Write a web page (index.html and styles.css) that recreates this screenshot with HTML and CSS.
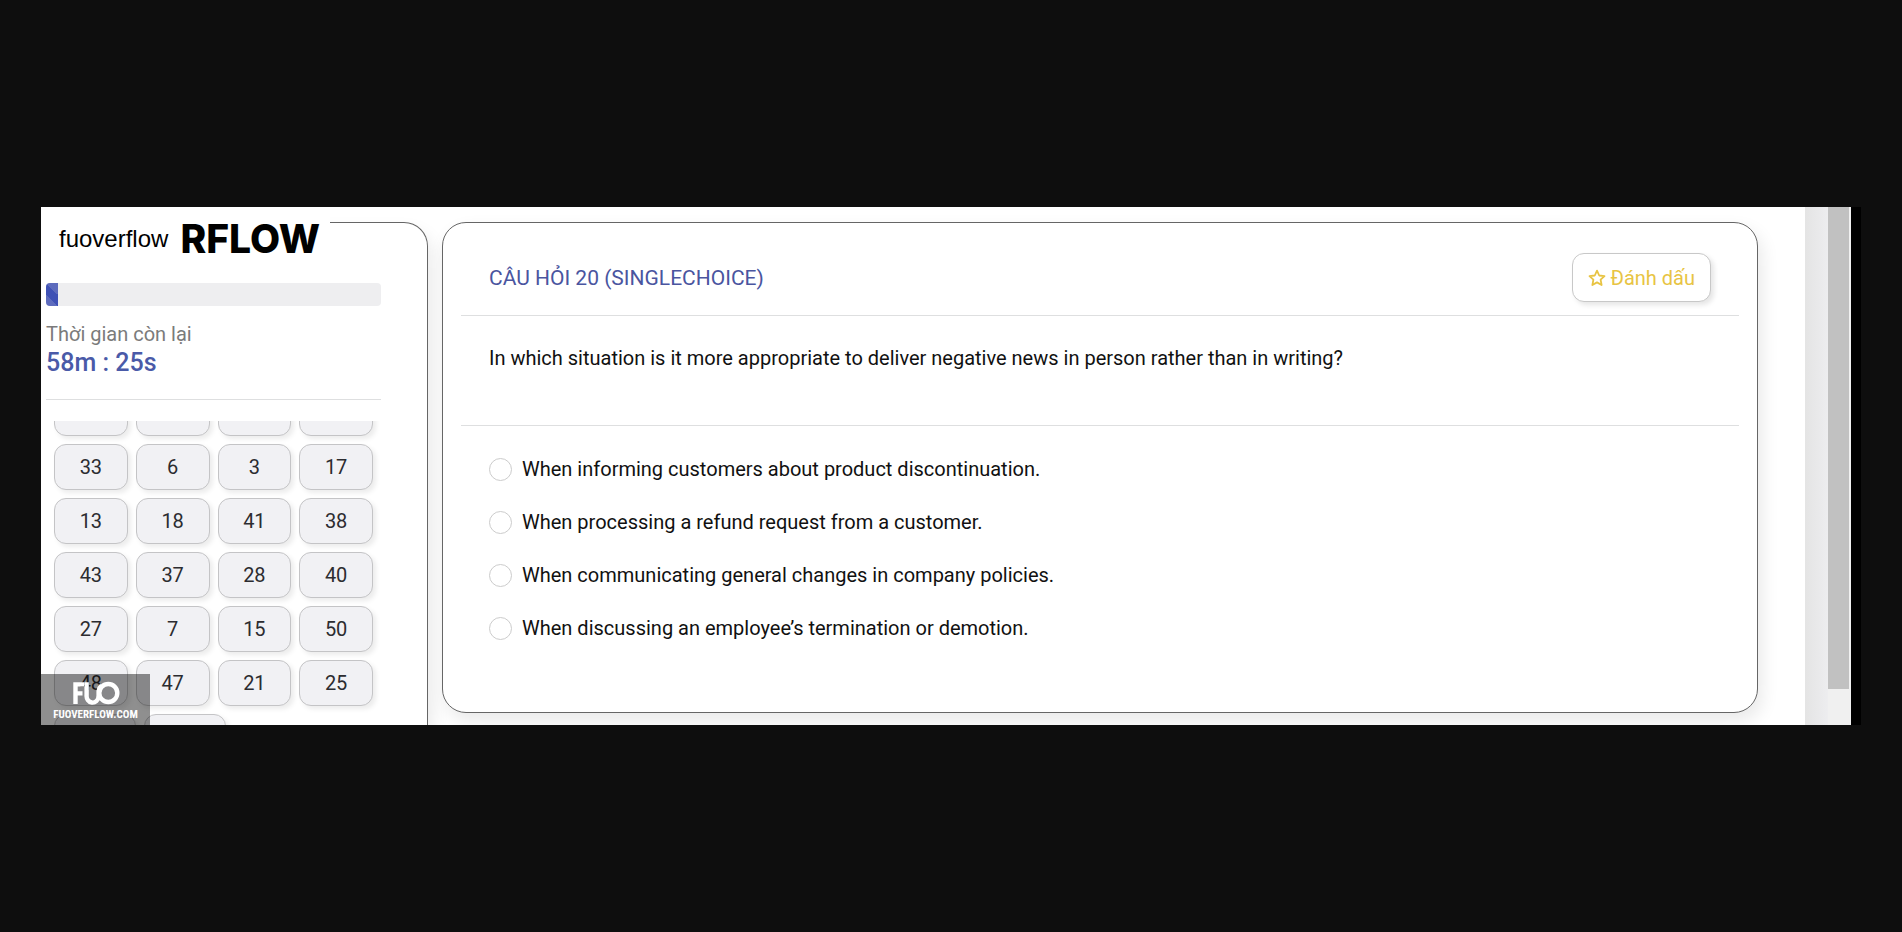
FILE: index.html
```html
<!DOCTYPE html>
<html lang="vi">
<head>
<meta charset="utf-8">
<title>FUOverflow</title>
<link rel="stylesheet" href="styles.css">
</head>
<body>
<div class="stage">
  <div class="page">
    <aside class="sidebar">
      <div class="brand"><span class="brand-name">fuoverflow</span><strong class="brand-mark">RFLOW</strong></div>
      <div class="progress"><div class="progress-fill"></div></div>
      <p class="time-label">Thời gian còn lại</p>
      <p class="time-value">58m : 25s</p>
      <hr class="rule">
      <nav class="numbers">
        <div class="number-grid">
          <button class="num" aria-label="1"></button><button class="num" aria-label="2"></button><button class="num" aria-label="4"></button><button class="num" aria-label="5"></button>
          <button class="num">33</button><button class="num">6</button><button class="num">3</button><button class="num">17</button>
          <button class="num">13</button><button class="num">18</button><button class="num">41</button><button class="num">38</button>
          <button class="num">43</button><button class="num">37</button><button class="num">28</button><button class="num">40</button>
          <button class="num">27</button><button class="num">7</button><button class="num">15</button><button class="num">50</button>
          <button class="num">48</button><button class="num">47</button><button class="num">21</button><button class="num">25</button>
        </div>
        <div class="number-last">
          <button class="num num-wide" aria-label="8"></button><button class="num num-wide" aria-label="9"></button>
        </div>
      </nav>
    </aside>
    <main class="card">
      <header class="card-head">
        <h1 class="title">CÂU HỎI 20 (SINGLECHOICE)</h1>
        <button class="mark">
          <svg class="star" viewBox="0 0 18 18" aria-hidden="true"><path d="M9 1.600l2.200 4.900 5.300.6-3.900 3.600 1 5.300L9 13.400 4.400 16l1-5.300L1.500 7.100l5.300-.6z" fill="none" stroke="currentColor" stroke-width="1.800" stroke-linejoin="round"/></svg>
          Đánh dấu
        </button>
      </header>
      <hr class="rule">
      <p class="question">In which situation is it more appropriate to deliver negative news in person rather than in writing?</p>
      <hr class="rule">
      <div class="options">
        <label class="option"><input class="radio" type="radio" name="answer">When informing customers about product discontinuation.</label>
        <label class="option"><input class="radio" type="radio" name="answer">When processing a refund request from a customer.</label>
        <label class="option"><input class="radio" type="radio" name="answer">When communicating general changes in company policies.</label>
        <label class="option"><input class="radio" type="radio" name="answer">When discussing an employee’s termination or demotion.</label>
      </div>
    </main>
  </div>
  <div class="edge"></div>
  <div class="track"><div class="thumb"></div></div>
  <div class="strip"></div>
  <div class="watermark">
    <svg class="watermark-logo" viewBox="0 0 48 24" aria-hidden="true"><g fill="none" stroke="#fff" stroke-width="4.400"><path d="M3.500 23V3.400H12M3.500 12.400H10.500"/><path d="M14.600 1.200v13a6 6.600 0 0 0 12 1.500"/><circle cx="36.300" cy="12" r="9"/><path d="M26.600 16V10a9.700 9 0 0 1 3-5.500"/></g></svg>
    <span class="watermark-text">FUOVERFLOW.COM</span>
  </div>
</div>
</body>
</html>
```
FILE: styles.css
```css
* { box-sizing: border-box; }

body {
  margin: 0;
  padding: 0 41px;
  min-height: 100vh;
  display: flex;
  flex-direction: column;
  justify-content: center;
  background: #0e0e0e;
  color: #111;
  font: 20px/28px Roboto, "Noto Sans", sans-serif;
}

h1, p { margin: 0; }

button { font: inherit; color: inherit; padding: 0; }

.stage {
  position: relative;
  display: flex;
  overflow: hidden;
}

.page {
  flex: 1;
  min-width: 0;
  display: flex;
  gap: 14px;
  padding: 15px 47px 0 0;
  background: #fff;
}

.sidebar {
  flex: 0 0 387px;
  display: flex;
  flex-direction: column;
  padding: 0 46px 0 5px;
  background: #fff;
  border: solid #666;
  border-width: 1px 1px 0 0;
  border-radius: 0 24px 0 0;
  box-shadow: 4px 10px 18px rgba(0, 0, 0, .09);
}

.brand {
  display: flex;
  align-items: center;
  align-self: flex-start;
  gap: 12px;
  height: 44px;
  margin: -6px 0 22px -5px;
  padding: 0 10px 0 18px;
  background: #fff;
  color: #000;
}

.brand-name { font: 24px/28px "Liberation Sans", Arial, sans-serif; }
.brand-mark { font: 800 39px/42px Inter, sans-serif; }

.progress {
  height: 23px;
  overflow: hidden;
  border-radius: 4px;
  background: #eeeef0;
}

.progress-fill {
  width: 12px;
  height: 100%;
  background: linear-gradient(45deg, #5d6bbd 25%, #3f51b5 25%, #3f51b5 50%, #5d6bbd 50%);
  background-size: 23px 23px;
}

.time-label { margin-top: 14px; color: #7b7b7b; }
.time-value { margin-bottom: 21px; color: #4a5aa8; font-weight: 500; font-size: 25px; line-height: 30px; }

.rule {
  width: 100%;
  height: 1px;
  margin: 0;
  border: 0;
  background: #dedfe0;
}

.numbers {
  flex: 1;
  contain: size;
  overflow: hidden;
  margin-top: 21px;
  padding: 0 8px;
}

.number-grid {
  display: grid;
  grid-template-columns: repeat(4, 1fr);
  gap: 8px;
  margin: -31px 0 8px;
}

.number-last { display: flex; gap: 8px; }

.num {
  height: 46px;
  border: 1px solid #c4c4c6;
  border-radius: 12px;
  background: #f1f1f4;
  color: #2c2c30;
  box-shadow: 3px 3px 5px rgba(0, 0, 0, .08);
}

.num-wide { width: 82px; }

.card {
  flex: 1;
  min-width: 0;
  margin-bottom: 12px;
  padding: 0 18px;
  background: #fff;
  border: 1px solid #666;
  border-radius: 24px;
  box-shadow: 4px 8px 18px rgba(0, 0, 0, .09);
}

.card-head {
  display: flex;
  align-items: center;
  justify-content: space-between;
  padding: 30px 28px 13px;
}

.title { color: #4a559f; font-size: 21px; font-weight: 400; line-height: 28px; }

.mark {
  display: flex;
  align-items: center;
  justify-content: center;
  gap: 4px;
  height: 49px;
  padding: 0 15px;
  border: 1px solid #c8c8c8;
  border-radius: 12px;
  background: #fff;
  color: #e8c443;
  box-shadow: 3px 3px 5px rgba(0, 0, 0, .1);
}

.star { width: 18px; height: 18px; }

.question { padding: 28px 28px 53px; }

.options {
  display: flex;
  flex-direction: column;
  align-items: flex-start;
  gap: 24px;
  padding: 29px 28px 69px;
}

.option { display: flex; align-items: center; gap: 10px; line-height: 29px; }

.radio {
  appearance: none;
  flex: none;
  width: 23px;
  height: 23px;
  margin: 0;
  border: 1px solid #ccc;
  border-radius: 50%;
  background: #fff;
}

.edge { width: 23px; background: linear-gradient(90deg, #e4e4e4, #ededef); }
.track { width: 23px; padding-right: 2px; background: #f0f0f0; }
.thumb { height: 93%; background: #c1c1c1; }
.strip { width: 10px; background: #000; }

.watermark {
  position: absolute;
  left: 0;
  bottom: 0;
  width: 109px;
  height: 51px;
  display: flex;
  flex-direction: column;
  align-items: center;
  padding-top: 7px;
  background: rgba(0, 0, 0, .44);
  color: #fff;
}

.watermark-logo { width: 48px; height: 24px; }
.watermark-text { margin-top: 2px; font: bold 11px/16px "Liberation Sans Narrow", "Roboto Condensed", "Liberation Sans", sans-serif; }
```
